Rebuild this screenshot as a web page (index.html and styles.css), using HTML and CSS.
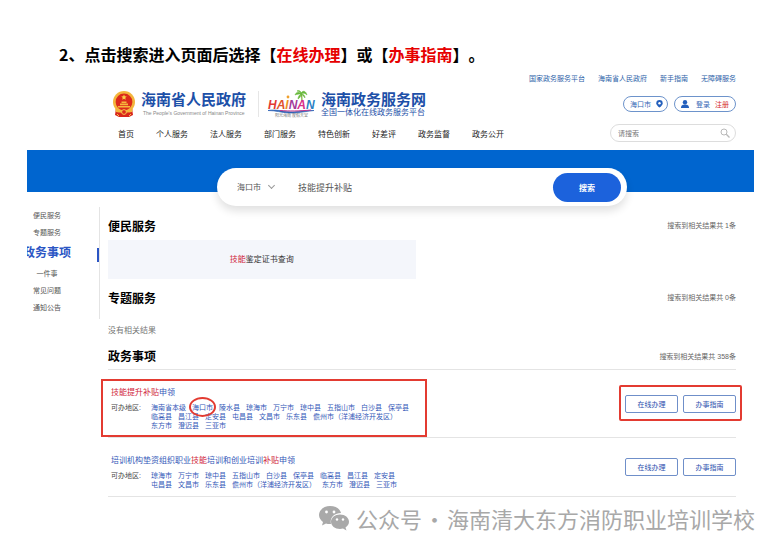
FILE: index.html
```html
<!DOCTYPE html>
<html lang="zh-CN">
<head>
    <meta charset="UTF-8">
    <title>海南政务服务网</title>
    <link rel="stylesheet" href="styles.css">
</head>
<body>
<h1 class="step">2、点击搜索进入页面后选择【<em>在线办理</em>】或【<em>办事指南</em>】。</h1>
<div class="sheet">
    <header class="header">
        <div class="top-links">
            <a href="#">国家政务服务平台</a>
            <a href="#">海南省人民政府</a>
            <a href="#">新手指南</a>
            <a href="#">无障碍服务</a>
        </div>
        <div class="brand">
            <svg class="emblem" viewBox="0 0 22 26">
                <path d="M3 17h16l1 7-4 2H6l-4-2z" fill="#d8261c"/>
                <circle cx="11" cy="11" r="11" fill="#f3b53c"/>
                <circle cx="11" cy="11" r="8.4" fill="#dc2a1c"/>
                <path d="M11 3.6l.8 1.7 1.9.2-1.4 1.3.4 1.9-1.7-1-1.7 1 .4-1.9-1.4-1.3 1.9-.2z" fill="#f8d04a"/>
                <path d="M5 15h12v1.6H5zM7 12.6h8v1.6H7zM8.5 10.6h5v1.3h-5z" fill="#f6b73c"/>
                <path d="M2 17c3 3 5 3.500 9 3.500s6-.5 9-3.500l-1 4c-3 1-5 0-8 0s-5 1-8 0z" fill="#f3b53c"/>
                <circle cx="11" cy="21" r="2.400" fill="#dc2a1c" stroke="#f6c04a"/>
                <path d="M4 23l2 2M18 23l-2 2" stroke="#f6c04a"/>
            </svg>
            <div class="brand-name gov">
                <strong>海南省人民政府</strong>
                <small>The People's Government of Hainan Province</small>
            </div>
            <svg class="hainan" viewBox="0 0 50 28">
                <path d="M35 11c0-3 0-5-1-8" fill="none" stroke="#7bb23c" stroke-width="1.300"/>
                <path d="M34 4c-2-3-5-2-6 1 2-1 4-1 6-1-2 1-3 3-3 5 2-1 3-3 3-5 2 1 3 3 4 4 0-2-1-4-4-4 2-1 4-1 6 1-1-4-4-5-6-2 0-2-2-3-4-2 2 0 3 1 4 3z" fill="#66b83a" stroke="#66b83a" stroke-width=".5"/>
                <text x="1" y="19"><tspan fill="#e23a34">H</tspan><tspan fill="#e0532e">A</tspan><tspan fill="#ee9222">I</tspan><tspan fill="#a33b9b">N</tspan><tspan fill="#d9308a">A</tspan><tspan fill="#2b7fc4">N</tspan></text>
                <circle cx="21" cy="7" r="1.400" fill="#f0a02c"/>
                <path d="M1 20.500c10-2 19 3 30 1 6-1 10-1 16-1-10 1-17 3-25 2.500-8-.5-13-2.500-21-2.500z" fill="#2d62b5" stroke="#2d62b5" stroke-width=".7"/>
                <path d="M13 20.500c10 .7 18 .7 31-.5" fill="none" stroke="#c5368c"/>
                <text class="slogan" x="8" y="27">阳光海南 度假天堂</text>
            </svg>
            <div class="brand-name net">
                <strong>海南政务服务网</strong>
                <small>全国一体化在线政务服务平台</small>
            </div>
            <div class="account">
                <button class="pill city" type="button">海口市
                    <svg class="pin" viewBox="0 0 8 10"><path d="M4 0a4 4 0 0 1 4 4c0 2-2 4-4 5.500C2 8 0 6 0 4a4 4 0 0 1 4-4z" fill="#2460bd"/><circle cx="4" cy="4" r="1.500" fill="#fff"/></svg>
                </button>
                <div class="pill">
                    <svg class="user" viewBox="0 0 8 8"><circle cx="4" cy="2.200" r="2.200" fill="#2460bd"/><path d="M0 8c0-3 2-3.500 4-3.500S8 5 8 8z" fill="#2460bd"/></svg>
                    <a href="#">登录</a>
                    <a class="register" href="#">注册</a>
                </div>
            </div>
        </div>
        <div class="nav-row">
            <nav class="nav">
                <a href="#">首页</a>
                <a href="#">个人服务</a>
                <a href="#">法人服务</a>
                <a href="#">部门服务</a>
                <a href="#">特色创新</a>
                <a href="#">好差评</a>
                <a href="#">政务监督</a>
                <a href="#">政务公开</a>
            </nav>
            <form class="site-search">
                <input type="search" placeholder="请搜索" aria-label="请搜索">
                <svg viewBox="0 0 10 10"><circle cx="4" cy="4" r="3" fill="none" stroke="#b9b9b9"/><path d="M6.300 6.300L9.500 9.500" stroke="#b9b9b9" stroke-width="1.300"/></svg>
            </form>
        </div>
    </header>

    <div class="banner">
        <form class="search">
            <select aria-label="地区">
                <option>海口市</option>
            </select>
            <input type="text" value="技能提升补贴" aria-label="关键词">
            <button type="button">搜索</button>
        </form>
    </div>

    <div class="content">
        <nav class="side">
            <a href="#">便民服务</a>
            <a href="#">专题服务</a>
            <a class="current" href="#">政务事项</a>
            <a href="#">一件事</a>
            <a href="#">常见问题</a>
            <a href="#">通知公告</a>
        </nav>
        <main class="results">
            <section class="handy">
                <div class="section-head">
                    <h2>便民服务</h2>
                    <span>搜索到相关结果共 1条</span>
                </div>
                <a class="card" href="#"><mark>技能</mark>鉴定证书查询</a>
            </section>
            <section class="topic">
                <div class="section-head">
                    <h2>专题服务</h2>
                    <span>搜索到相关结果共 0条</span>
                </div>
                <p class="empty">没有相关结果</p>
            </section>
            <section class="matters">
                <div class="section-head">
                    <h2>政务事项</h2>
                    <span>搜索到相关结果共 358条</span>
                </div>
                <article class="matter">
                    <div class="info boxed">
                        <h3><a href="#"><mark>技能提升补贴</mark>申领</a></h3>
                        <div class="areas">
                            <span>可办地区:</span>
                            <div class="area-list">
                                <a href="#">海南省本级</a>
                                <a class="circled" href="#">海口市</a>
                                <a href="#">陵水县</a>
                                <a href="#">琼海市</a>
                                <a href="#">万宁市</a>
                                <a href="#">琼中县</a>
                                <a href="#">五指山市</a>
                                <a href="#">白沙县</a>
                                <a href="#">保亭县</a>
                                <a href="#">临高县</a>
                                <a href="#">昌江县</a>
                                <a href="#">定安县</a>
                                <a href="#">屯昌县</a>
                                <a href="#">文昌市</a>
                                <a href="#">乐东县</a>
                                <a href="#">儋州市（洋浦经济开发区）</a>
                                <a href="#">东方市</a>
                                <a href="#">澄迈县</a>
                                <a href="#">三亚市</a>
                            </div>
                        </div>
                    </div>
                    <div class="actions boxed">
                        <button type="button">在线办理</button>
                        <button type="button">办事指南</button>
                    </div>
                </article>
                <article class="matter">
                    <div class="info">
                        <h3><a href="#">培训机构垫资组织职业<mark>技能</mark>培训和创业培训<mark>补贴</mark>申领</a></h3>
                        <div class="areas">
                            <span>可办地区:</span>
                            <div class="area-list">
                                <a href="#">琼海市</a>
                                <a href="#">万宁市</a>
                                <a href="#">琼中县</a>
                                <a href="#">五指山市</a>
                                <a href="#">白沙县</a>
                                <a href="#">保亭县</a>
                                <a href="#">临高县</a>
                                <a href="#">昌江县</a>
                                <a href="#">定安县</a>
                                <a href="#">屯昌县</a>
                                <a href="#">文昌市</a>
                                <a href="#">乐东县</a>
                                <a href="#">儋州市（洋浦经济开发区）</a>
                                <a href="#">东方市</a>
                                <a href="#">澄迈县</a>
                                <a href="#">三亚市</a>
                            </div>
                        </div>
                    </div>
                    <div class="actions">
                        <button type="button">在线办理</button>
                        <button type="button">办事指南</button>
                    </div>
                </article>
            </section>
        </main>
    </div>
</div>
<footer class="source">
    <svg viewBox="0 0 30 26">
        <path d="M11 1C5 1 0 5 0 10c0 3 2 5.500 4 7l-1 3.500 4-2c1.500.5 3 .6 5 .5-1.500-6 3-11 10-11C21 4 17 1 11 1z" fill="#a9a9a9"/>
        <path d="M21 9.500c-5 0-9 3.200-9 7.300s4 7.200 9 7.200c1 0 2-.1 3-.4l3.500 1.900-1-3c2-1.300 3.500-3.300 3.500-5.700 0-4.100-4-7.300-9-7.300z" fill="#a9a9a9"/>
        <g fill="#fff"><circle cx="7.500" cy="7" r="1.400"/><circle cx="15" cy="7" r="1.400"/><circle cx="18" cy="14.500" r="1.200"/><circle cx="24" cy="14.500" r="1.200"/></g>
    </svg>
    <span>公众号</span><span class="dot">·</span><span>海南清大东方消防职业培训学校</span>
</footer>
</body>
</html>
```

FILE: styles.css
```css
*{margin:0; padding:0; box-sizing:border-box;}
body{background:#fff; font-family:"Liberation Sans","Noto Sans CJK SC",sans-serif; font-size:7px; color:#555;
text-spacing-trim:space-all;}
a{color:inherit; text-decoration:none;}
button,input,select{font:inherit; color:inherit; border:0; background:none; outline:none;}
mark{background:none; color:#d0243a;}
svg{display:block; flex:none;}

.step{padding:42px 0 0 59px; font:bold 16px/24px "Noto Sans CJK SC",sans-serif; color:#000;}
.step em{font-style:normal; color:#e60000;}
.sheet{margin:0 26px 0 27px;}

.header{padding:7px 18px 8px 86px;}
.top-links{display:flex; justify-content:flex-end; gap:13px; line-height:12px; color:#2d62a8;}
.brand{display:flex; align-items:center; height:27px; margin-top:5px;}
.emblem{width:22px; height:26px;}
.brand-name{display:flex; flex-direction:column; white-space:nowrap; color:#1d50a8;}
.brand-name strong{font-size:15px; line-height:18px;}
.brand-name small{line-height:8px;}
.gov{margin-left:6px; padding-right:12px; border-right:1px solid #e6e6e6;}
.gov small{font-size:5px; color:#888; padding-left:2px;}
.net small{font-size:8px;}
.hainan{width:50px; height:28px; margin:0 4px 0 8px;}
.hainan text{font:italic bold 12px "Liberation Sans",sans-serif;}
.hainan .slogan{font:4px "Noto Sans CJK SC",sans-serif; fill:#777;}
.account{display:flex; gap:6px; margin-left:auto;}
.pill{display:flex; align-items:center; gap:7px; height:16px; padding:0 6px; border:1px solid #6d93cb; border-radius:8px; color:#3567b5; white-space:nowrap;}
.pill.city{gap:5px; padding:0 4px 0 6px;}
.pin{width:7px; height:8px;}
.user{width:8px; height:8px;}
.pill .register{color:#d42a2a; margin-left:-2px;}

.nav-row{display:flex; align-items:center; justify-content:space-between; height:18px; margin-top:7px;}
.nav{display:flex; gap:22px; padding-left:5px; font-size:8px; color:#222; white-space:nowrap;}
.site-search{display:flex; align-items:center; width:126px; height:18px; padding:0 5px 0 7px; border:1px solid #ddd; border-radius:9px;}
.site-search input{flex:1; min-width:0;}
.site-search input::placeholder{color:#777;}
.site-search svg{width:10px; height:10px;}

.banner{height:42px; padding:18px 127px 0 190px; background:#0065cf;}
.search{display:flex; align-items:center; height:38px; padding:0 6px 0 20px; background:#fff; border-radius:19px; box-shadow:0 5px 8px rgba(0,0,0,.12); position:relative;}
.search select{width:38px; font-size:8px; appearance:none;}
.search::before{content:""; position:absolute; left:52px; top:15px; width:4px; height:4px; border:solid #999; border-width:0 1px 1px 0; transform:rotate(45deg);}
.search input{flex:1; min-width:0; margin-left:23px; font-size:9px;}
.search button{width:68px; height:29px; border-radius:15px; background:#1c62dc; color:#fff; font-size:8px; font-weight:bold;}

.content{display:flex; align-items:flex-start; padding-top:15px;}
.side{display:flex; flex-direction:column; align-items:center; width:73px; height:112px; padding-right:32px; border-right:1px solid #e4e4e4; overflow:hidden; line-height:17px; white-space:nowrap; position:relative;}
.side .current{font-size:12px; font-weight:bold; line-height:24px; color:#2b55c4;}
.side .current::after{content:""; position:absolute; right:0; top:41px; width:2px; height:14px; background:#2b55c4;}
.results{flex:1; padding:8px 18px 0 8px;}
.section-head{display:flex; align-items:center; justify-content:space-between; height:20px;}
.section-head h2{font-size:12px; color:#000;}
.section-head span{color:#666;}
.card{display:block; width:49%; margin-top:5px; background:#f4f6fb; font-size:8px; line-height:39px; text-align:center; color:#333;}
.topic{margin-top:8px;}
.empty{margin-top:18px; font-size:8px; line-height:12px; color:#777;}
.matters{margin-top:9px;}
.matters .section-head{height:24px; padding-bottom:4px; border-bottom:1px solid #e4e4e4;}

.matter{display:flex; align-items:center; justify-content:space-between; padding-left:3px; border-bottom:1px solid #e4e4e4;}
.info{padding:17px 0 7px; position:relative;}
.info h3{font-size:8px; font-weight:normal; line-height:12px; color:#3358b8;}
.areas{display:flex; margin-top:4px; line-height:9px;}
.areas span{width:40px; color:#444;}
.area-list{display:flex; flex-wrap:wrap; column-gap:6px; width:264px; color:#3358b8;}
.actions{display:flex; gap:5px; position:relative;}
.actions button{width:53px; height:18px; border:1px solid #6f8fc9; border-radius:2px; color:#2c4fae;}

/* red marks drawn over the page */
.boxed::after,.circled::after{content:""; position:absolute; border:2px solid #e33b31; pointer-events:none;}
.info.boxed::after{inset:9px -12px 0 -10px;}
.actions.boxed::after{inset:-10px -6px -8px; border-radius:2px;}
.circled{position:relative;}
.circled::after{inset:-6px -3px -5px; border-radius:50%;}

.source{display:flex; align-items:center; justify-content:flex-end; height:26px; margin:8px 25px 0 0; font:22px/26px "Noto Sans CJK SC",sans-serif; color:#a8a8a8; white-space:nowrap;}
.source svg{width:30px; height:26px; margin-right:7px;}
.dot{width:25px; text-align:center;}
```
